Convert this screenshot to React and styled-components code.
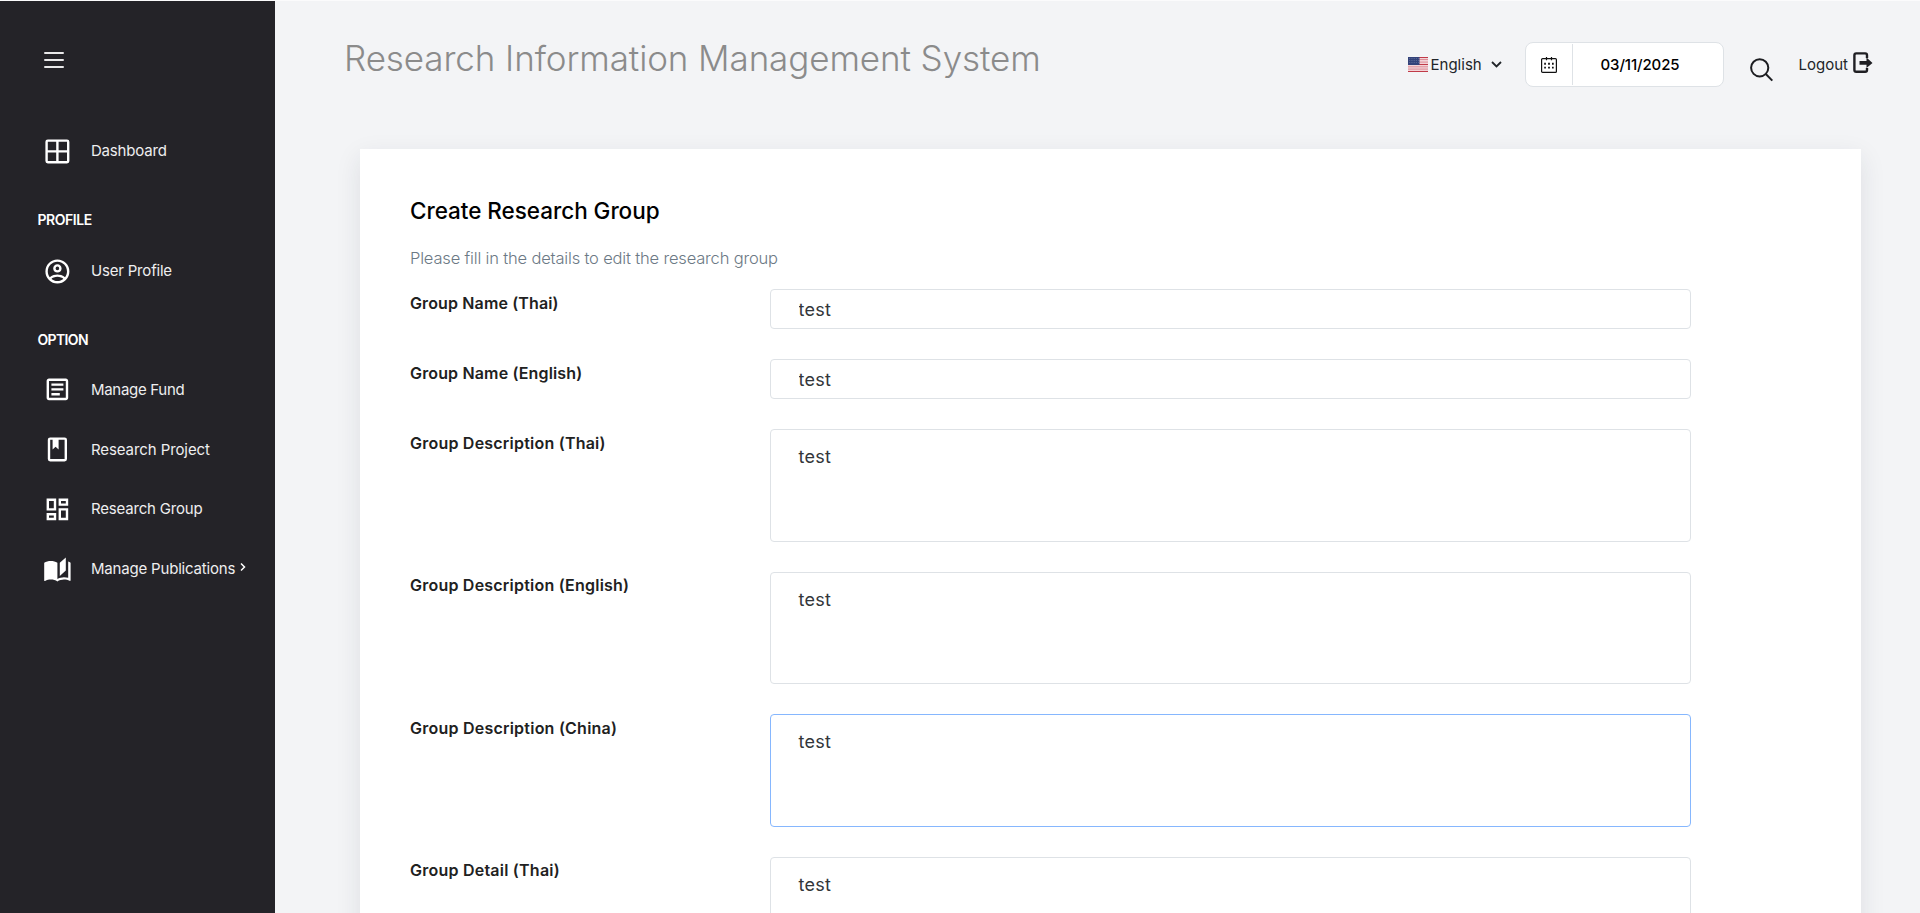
import React from 'react';
import styled, { createGlobalStyle } from 'styled-components';

const GlobalStyle = createGlobalStyle`
  * { box-sizing: border-box; }
  body {
    margin: 0;
    overflow: hidden;
    background: #f3f4f6;
    font-family: Inter, "Liberation Sans", sans-serif;
    color: #212529;
  }
`;

const Page = styled.div`
  display: flex;
  height: 100vh;
  overflow: hidden;
  border-top: 1px solid #fbfbfc;
`;

const Sidebar = styled.aside`
  flex: 0 0 275px;
  background: #242328;
  color: #fff;
`;

const MenuButton = styled.button`
  display: flex;
  flex-direction: column;
  gap: 5px;
  width: 20px;
  margin: 51px 0 0 44px;
  padding: 0;
  border: 0;
  background: none;
`;

const MenuBar = styled.span`
  height: 2px;
  border-radius: 1px;
  background: #e9e9ea;
`;

const Nav = styled.nav`
  display: flex;
  flex-direction: column;
  padding-top: 53px;
`;

const NavItem = styled.a`
  display: flex;
  align-items: center;
  height: ${(p) => p.$height || 59.7}px;
  padding-left: 43px;
  font-size: 15px;
  line-height: 20px;
  letter-spacing: ${(p) => p.$spacing || -0.19}px;
  color: #eeeeef;
  white-space: nowrap;

  svg { flex: none; fill: #fff; }
`;

const NavLabel = styled.span`
  margin: 0 0 0 19.2px;
`;

const NavArrow = styled.svg`
  margin: -3px 0 0 5px;
`;

const NavSection = styled.h2`
  height: ${(p) => p.$height || 60}px;
  margin: 0;
  padding: 29px 0 0 37.5px;
  font-size: 14px;
  font-weight: 600;
  line-height: 20px;
  letter-spacing: ${(p) => p.$spacing}px;
`;

const Main = styled.main`
  flex: 1;
  min-width: 0;
`;

const Header = styled.header`
  display: flex;
  justify-content: space-between;
  height: 148px;
  padding: 36px 47px 0 69px;
`;

const Title = styled.h1`
  margin: 0;
  font-size: 35px;
  font-weight: 300;
  line-height: 42px;
  letter-spacing: -0.1px;
  color: #8b8b8b;
  white-space: nowrap;
`;

const Tools = styled.div`
  display: flex;
  align-items: center;
  height: 45px;
  margin-top: 5px;
  font-size: 15px;
  line-height: 20px;
`;

const Language = styled.div`
  display: flex;
  align-items: center;
  width: 117px;

  span { margin: 1px 9.5px 0 3px; }
`;

const DateBox = styled.div`
  display: flex;
  width: 199px;
  height: 45px;
  border: 1px solid #dee2e6;
  border-radius: 8px;
  background: #fff;
`;

const DateAddon = styled.div`
  display: flex;
  align-items: center;
  justify-content: center;
  width: 47px;
  margin: 1px 0;
  border-right: 1px solid #dee2e6;
`;

const DateValue = styled.div`
  padding: 12px 0 0 28px;
  font-weight: 450;
  letter-spacing: -0.12px;
  color: #000;
`;

const SearchButton = styled.button`
  display: flex;
  margin: 10px 26px 0 26px;
  padding: 0;
  border: 0;
  background: none;
`;

const Logout = styled.a`
  display: flex;
  align-items: center;

  span { margin-top: 1px; }
  svg { margin: -4px 0 0 5px; }
`;

const Card = styled.section`
  width: 1501px;
  height: 900px;
  margin-left: 85px;
  padding: 46px 50px 0;
  background: #fff;
  box-shadow: 0 8px 24px rgba(33, 37, 60, 0.1);
`;

const CardTitle = styled.h2`
  margin: 0;
  font-size: 22.5px;
  font-weight: 500;
  line-height: 32px;
  letter-spacing: -0.04px;
  color: #000;
`;

const CardHint = styled.p`
  margin: 19px 0 19px;
  font-size: 16.5px;
  font-weight: 300;
  line-height: 24px;
  letter-spacing: -0.17px;
  color: #6c7985;
`;

const FormRow = styled.div`
  display: grid;
  grid-template-columns: 360px 921px;
  align-items: start;
  margin-bottom: 30px;
`;

const Label = styled.label`
  padding-top: 3.6px;
  font-size: 16px;
  font-weight: 600;
  line-height: 20px;
  letter-spacing: ${(p) => p.$spacing}px;
  color: #212121;
`;

const fieldStyle = `
  display: block;
  width: 100%;
  margin: 0;
  border: 1px solid #dee2e6;
  border-radius: 4px;
  outline: 0;
  background: #fff;
  font: 400 18px/24px Inter, "Liberation Sans", sans-serif;
  letter-spacing: 0.26px;
  color: #33363a;
  resize: none;
`;

const Input = styled.input`
  ${fieldStyle}
  height: 40px;
  padding: 0 27.5px;
`;

const TextArea = styled.textarea`
  ${fieldStyle}
  height: 112.6px;
  padding: 15px 27.5px;
  overflow: hidden;
  border-color: ${(p) => (p.$active ? '#86b7fe' : '#dee2e6')};
`;

const MdiIcon = ({ d }) => (
  <svg width="28.8" height="28.8" viewBox="0 0 24 24"><path d={d} /></svg>
);

const icons = {
  grid: 'M4 2H20A2 2 0 0 1 22 4V20A2 2 0 0 1 20 22H4A2 2 0 0 1 2 20V4A2 2 0 0 1 4 2M4 4V11H11V4H4M13 4V11H20V4H13M4 13V20H11V13H4M13 13V20H20V13H13Z',
  account: 'M12,2A10,10 0 0,0 2,12A10,10 0 0,0 12,22A10,10 0 0,0 22,12A10,10 0 0,0 12,2M7.07,18.28C7.5,17.38 10.12,16.5 12,16.5C13.88,16.5 16.5,17.38 16.93,18.28C15.57,19.36 13.86,20 12,20C10.14,20 8.43,19.36 7.07,18.28M18.36,16.83C16.93,15.09 13.46,14.5 12,14.5C10.54,14.5 7.07,15.09 5.64,16.83C4.62,15.5 4,13.82 4,12C4,7.59 7.59,4 12,4C16.41,4 20,7.59 20,12C20,13.82 19.38,15.5 18.36,16.83M12,6C10.06,6 8.5,7.56 8.5,9.5C8.5,11.44 10.06,13 12,13C13.94,13 15.5,11.44 15.5,9.5C15.5,7.56 13.94,6 12,6M12,11A1.5,1.5 0 0,1 10.5,9.5A1.5,1.5 0 0,1 12,8A1.5,1.5 0 0,1 13.5,9.5A1.5,1.5 0 0,1 12,11Z',
  document: 'M5,3C3.89,3 3,3.89 3,5V19C3,20.11 3.89,21 5,21H19C20.11,21 21,20.11 21,19V5C21,3.89 20.11,3 19,3H5M5,5H19V19H5V5M7,7V9H17V7H7M7,11V13H17V11H7M7,15V17H14V15H7Z',
  book: 'M18,2A2,2 0 0,1 20,4V20A2,2 0 0,1 18,22H6A2,2 0 0,1 4,20V4A2,2 0 0,1 6,2H18M18,4H13V12L10.5,9.75L8,12V4H6V20H18V4Z',
  dashboard: 'M19,5V7H15V5H19M9,5V11H5V5H9M19,13V19H15V13H19M9,17V19H5V17H9M21,3H13V9H21V3M11,3H3V13H11V3M21,11H13V21H21V11M11,15H3V21H11V15Z',
  openBook: 'M19 2L14 6.5V17.5L19 13V2M6.5 5C4.55 5 2.45 5.4 1 6.5V21.16C1 21.41 1.25 21.66 1.5 21.66C1.6 21.66 1.65 21.59 1.75 21.59C3.1 20.94 5.05 20.5 6.5 20.5C8.45 20.5 10.55 20.9 12 22C13.35 21.15 15.8 20.5 17.5 20.5C19.15 20.5 20.85 20.81 22.25 21.56C22.35 21.61 22.4 21.59 22.5 21.59C22.75 21.59 23 21.34 23 21.09V6.5C22.4 6.05 21.75 5.75 21 5.5V19C19.9 18.65 18.7 18.5 17.5 18.5C15.8 18.5 13.35 19.15 12 20V6.5C10.55 5.4 8.45 5 6.5 5Z',
};

const Flag = () => (
  <svg width="20" height="15" viewBox="0 0 20 15">
    <rect width="20" height="15" fill="#f3d3d7" />
    {[0, 7, 14].map((y) => (
      <rect key={y} y={y} width="20" height="1" fill="#c03a48" />
    ))}
    {[2, 4.6, 9.3, 11.6].map((y) => (
      <rect key={y} y={y} width="20" height="1" fill="#dd8f99" />
    ))}
    <rect width="11.5" height="8" fill="#33437a" />
    {[1.5, 3.5, 5.5].map((y) => (
      <path key={y} d={`M1 ${y}H11`} stroke="#8791b3" strokeWidth=".6" strokeDasharray=".7 1.1" />
    ))}
  </svg>
);

const CalendarIcon = () => (
  <svg width="16" height="16" viewBox="0 0 16 16" fill="none" stroke="#111">
    <rect x=".6" y="1.6" width="14.8" height="13.8" rx="1" strokeWidth="1.2" />
    <path d="M5.5 0V3.2M10.5 0V3.2" strokeWidth="1.2" />
    <path d="M3.2 6.8H4.9M7.1 6.8H8.9M11 6.8H12.7M3.2 10.6H4.9M7.1 10.6H8.9M11 10.6H12.7" strokeWidth="1.9" />
  </svg>
);

const navOptions = [
  { label: 'Manage Fund', icon: 'document', spacing: -0.3 },
  { label: 'Research Project', icon: 'book', spacing: -0.09 },
  { label: 'Research Group', icon: 'dashboard' },
  { label: 'Manage Publications', icon: 'openBook', arrow: true },
];

const fields = [
  { label: 'Group Name (Thai)', spacing: 0.13 },
  { label: 'Group Name (English)', spacing: 0.15 },
  { label: 'Group Description (Thai)', multiline: true, spacing: 0.22 },
  { label: 'Group Description (English)', multiline: true, spacing: 0.22 },
  { label: 'Group Description (China)', multiline: true, active: true, spacing: 0.23 },
  { label: 'Group Detail (Thai)', multiline: true, spacing: 0.23 },
];

export default function App() {
  return (
    <>
      <GlobalStyle />
      <Page>
        <Sidebar>
          <MenuButton aria-label="Menu"><MenuBar /><MenuBar /><MenuBar /></MenuButton>
          <Nav>
            <NavItem $height={60}><MdiIcon d={icons.grid} /><NavLabel>Dashboard</NavLabel></NavItem>
            <NavSection $spacing={-0.45}>PROFILE</NavSection>
            <NavItem $height={60}><MdiIcon d={icons.account} /><NavLabel>User Profile</NavLabel></NavItem>
            <NavSection $height={59} $spacing={-0.65}>OPTION</NavSection>
            {navOptions.map((o) => (
              <NavItem key={o.label} $spacing={o.spacing}>
                <MdiIcon d={icons[o.icon]} />
                <NavLabel>{o.label}</NavLabel>
                {o.arrow && (
                  <NavArrow width="6" height="10" viewBox="0 0 6 10">
                    <path d="M1 1.5L4.5 5L1 8.5" fill="none" stroke="#fff" strokeWidth="1.5" />
                  </NavArrow>
                )}
              </NavItem>
            ))}
          </Nav>
        </Sidebar>
        <Main>
          <Header>
            <Title>Research Information Management System</Title>
            <Tools>
              <Language>
                <Flag />
                <span>English</span>
                <svg width="11" height="7" viewBox="0 0 11 7">
                  <path d="M1 1L5.5 5.5L10 1" fill="none" stroke="#212529" strokeWidth="1.8" />
                </svg>
              </Language>
              <DateBox>
                <DateAddon><CalendarIcon /></DateAddon>
                <DateValue>03/11/2025</DateValue>
              </DateBox>
              <SearchButton aria-label="Search">
                <svg width="23" height="24" viewBox="0 0 23 24" fill="none" stroke="#1c1d21" strokeWidth="2">
                  <circle cx="9.7" cy="9.8" r="8.6" />
                  <path d="M15.8 16L22.3 22.6" />
                </svg>
              </SearchButton>
              <Logout>
                <span>Logout</span>
                <svg width="20" height="22" viewBox="0 0 20 22">
                  <path d="M14 6V3.2Q14 1.4 12.2 1.4H3.2Q1.4 1.4 1.4 3.2V18Q1.4 19.8 3.2 19.8H12.2Q14 19.8 14 18V16" fill="none" stroke="#1f1f23" strokeWidth="2.4" />
                  <path d="M6.5 9H13.5V5.5L19.5 11L13.5 16V12.8H6.5Z" fill="#1f1f23" />
                </svg>
              </Logout>
            </Tools>
          </Header>
          <Card>
            <CardTitle>Create Research Group</CardTitle>
            <CardHint>Please fill in the details to edit the research group</CardHint>
            {fields.map((f) => (
              <FormRow key={f.label}>
                <Label $spacing={f.spacing}>{f.label}</Label>
                {f.multiline
                  ? <TextArea defaultValue="test" $active={f.active} />
                  : <Input defaultValue="test" />}
              </FormRow>
            ))}
          </Card>
        </Main>
      </Page>
    </>
  );
}
